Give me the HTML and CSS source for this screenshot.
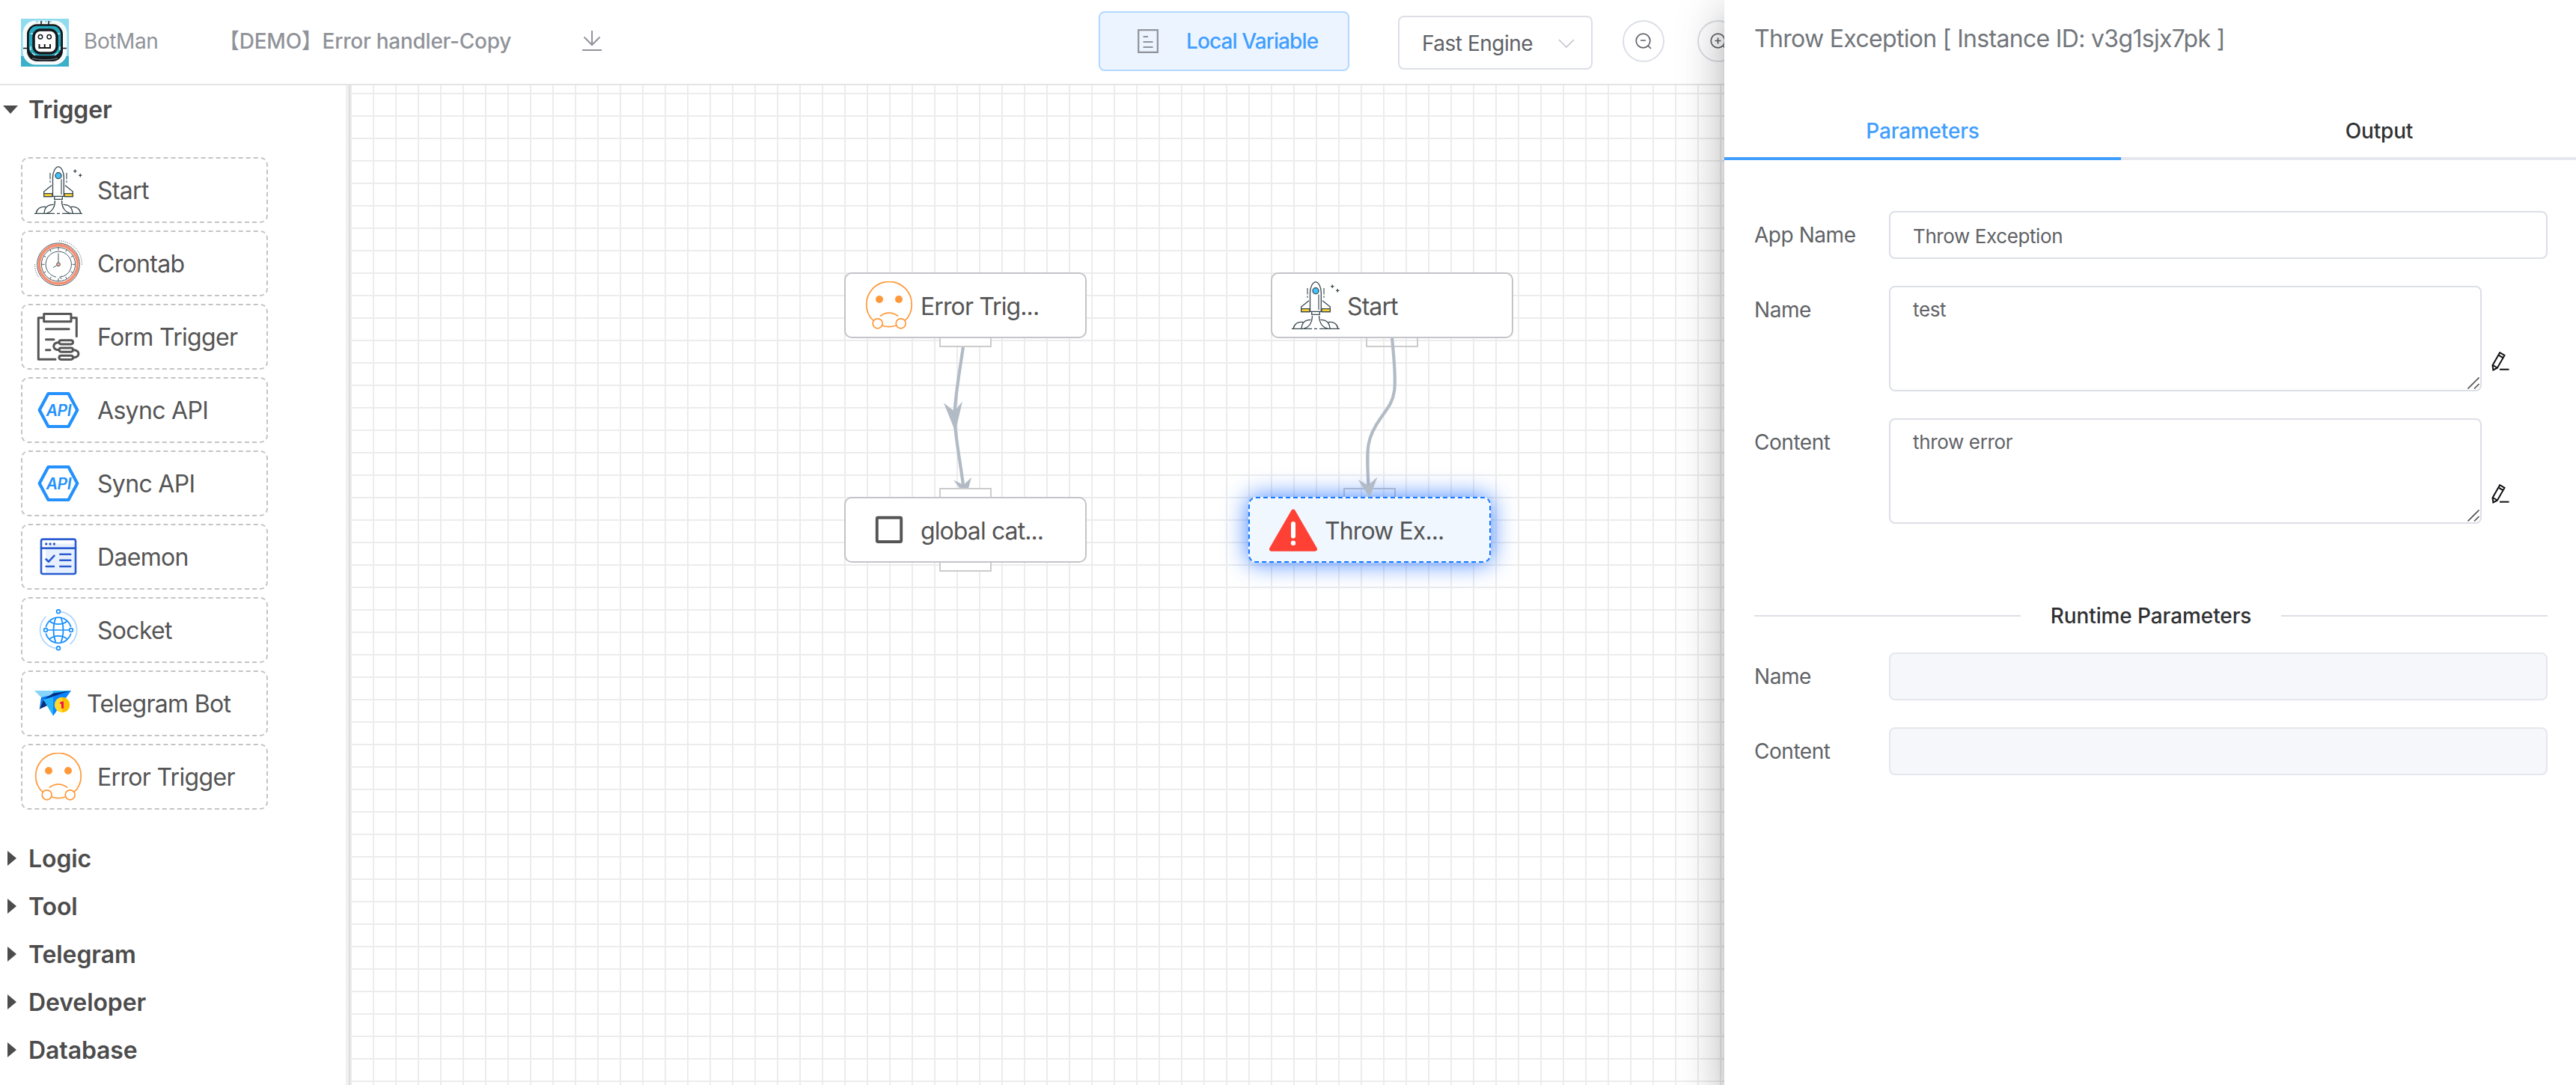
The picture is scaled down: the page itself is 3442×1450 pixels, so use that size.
FILE: index.html
```html
<!DOCTYPE html>
<html lang="en">
<head>
<meta charset="utf-8">
<title>BotMan</title>
<link rel="stylesheet" href="styles.css">
</head>
<body>
<svg class="sprite" aria-hidden="true">
  <symbol id="i-rocket" viewBox="0 0 64 64">
    <g fill="none" stroke="#37474f" stroke-width="1.3">
      <path d="M23 25.7 12.7 34v6.5H24M41 25.7 51.3 34v6.5H40"/>
      <path d="M12.7 36.6H24v4H12.7zM40 36.6h11.3v4H40z" fill="#fdd131"/>
      <path d="M24.5 40.3V15C24.5 8 28 .8 32 .8S39.3 8 39.3 15v25.3z" fill="#fff"/>
      <path d="M36 17.500v20.500" stroke="#90979b" stroke-width="2"/>
      <circle cx="32" cy="12.700" r="4" fill="#40c4ff"/>
      <path d="M26.700 40.700v3.600h10.600v-3.600"/>
      <path d="M21 9v8.500M21 19.500v2.500M43 9v8.500M43 19.500v2.500" stroke="#7d868b" stroke-width="1.700"/>
      <path d="M54.300 4.500v4.400M52.100 6.700h4.400M61.300 10.100v4.400M59.100 12.300h4.400"/>
      <path d="M27.400 46c.3 8-3.400 15-11 17M36.600 46c-.3 8 3.400 15 11 17M13 63c.5-7.500 5-11.700 12.500-11.700M51 63c-.5-7.500-5-11.700-12.500-11.700M2.300 63c.7-5.500 5.500-9.700 12.700-8.500M61.700 63c-.7-5.500-5.500-9.700-12.700-8.500"/>
      <path d="M0 63.300h27M30 63.300h4M37 63.300h27"/>
    </g>
  </symbol>
  <symbol id="i-clock" viewBox="0 0 64 64">
    <g fill="none" stroke="#455a64" stroke-width="1">
      <circle cx="32" cy="33.300" r="28.400"/>
      <circle cx="32" cy="33.300" r="25.700" stroke="#f68e71" stroke-width="3.600"/>
      <circle cx="32" cy="33.300" r="22.600"/>
      <path d="M29 50.200A17.200 17.200 0 1 1 36 50.100M33.500 50.700l3-2M33.500 50.700l3 1.800"/>
      <path d="M32 10.500v4M32 52v4M9.500 33.300h4M50.500 33.300h4M20.500 13.500l1.800 3M43.500 13.500l-1.800 3M20.500 53l1.800-3M43.500 53l-1.800-3M12.300 21.800l3 1.800M51.700 21.800l-3 1.800M12.300 44.800l3-1.800M51.700 44.800l-3-1.800"/>
      <path d="M32 18.500v12.500" stroke="#8a9499" stroke-width="1.600"/>
      <path d="M29.700 34.700 25 37.700"/>
      <circle cx="32" cy="33.300" r="2.400" fill="#ffab91"/>
      <path d="M33 1.800A31.500 31.500 0 0 1 63.500 34M.5 33a31.500 31.500 0 0 0 6 18.500" stroke-dasharray="1.200 1.600"/>
    </g>
  </symbol>
  <symbol id="i-form" viewBox="0 0 64 64">
    <g fill="none" stroke="#555" stroke-width="3" stroke-linejoin="round" stroke-linecap="round">
      <path d="M12.700 6.700H5.300v55.600H28M49 6.700h7.300V31.500M12.700 1.500H49v10.200H12.700z"/>
      <path d="M15.500 21.700h30.700M15.500 35.700h10.500M15.500 49.700h5.500"/>
      <rect x="33" y="36.700" width="18.500" height="5.200" rx="2.600"/>
      <rect x="33" y="47" width="18.500" height="5.200" rx="2.600"/>
      <rect x="33" y="57.200" width="18.500" height="5.200" rx="2.600"/>
      <path d="M32.500 39.500c-9 1-9 9.300 0 10.300M52 49.500c9 1 9.500 9.500 0 10.500"/>
    </g>
  </symbol>
  <symbol id="i-daemon" viewBox="0 0 64 64">
    <path d="M15 16H56v40H15z" fill="#e6f0fe"/>
    <path d="M9 9h46v11H9z" fill="#fff"/><path d="M28 14.500h26v4.500H15z" fill="#e6f0fe"/>
    <g fill="none" stroke="#2a5bd0" stroke-width="2.600" stroke-linecap="round" stroke-linejoin="round">
      <rect x="9" y="8.600" width="46" height="46.400" rx="2.500"/>
      <path d="M9 20.600h46"/>
      <path d="M15.700 15h.1M21 15h.1M26.300 15h.1" stroke-width="3.400"/>
      <path d="M15.500 35.300 19 38.700l7.500-8M34.300 28.700h14M34.300 36.700h14M34.300 45h14M15.700 45H26"/>
    </g>
  </symbol>
  <symbol id="i-socket" viewBox="0 0 64 64">
    <g fill="none" stroke="#1890ff" stroke-width="1.700">
      <path d="M35 7.600A24.500 24.500 0 0 1 47.500 51M29 56.300A24.500 24.500 0 0 1 15.500 14" stroke="#afd5fd"/>
      <path d="M15.300 28a17.300 17.300 0 0 1 33.400 0M15.300 36.500a17.300 17.300 0 0 0 33.400 0"/>
      <path d="M18 32h28M28.500 15.500c-4 10-4 23 0 33M35.500 15.500c4 10 4 23 0 33M20 20c7 5.500 17 5.500 24 0M20 44c7-5.500 17-5.500 24 0"/>
      <g fill="#fff"><circle cx="32" cy="7.300" r="2.400"/><circle cx="32" cy="56.300" r="2.400"/><circle cx="15" cy="32" r="2.400"/><circle cx="49" cy="32" r="2.400"/></g>
    </g>
  </symbol>
  <symbol id="i-telegram" viewBox="0 0 50 64">
    <path d="M0 15h25v7L9 24z" fill="#86d3fb"/>
    <path d="M25 15h24l-24 7z" fill="#27b5fa"/>
    <path d="M9 24 49 15 25 24 12 27 6.700 39.700z" fill="#0277fa"/>
    <path d="M25 18.500 49 15 12 27z" fill="#04307f"/>
    <path d="M49 15 12 27l13 6z" fill="#0a84ff"/>
    <path d="M6.700 39.700 12 27l6 7.500z" fill="#04307f"/>
    <path d="M12 27l13-3.500v25.200z" fill="#27b5fa"/>
    <path d="M25 23.500 49 15 25 48.700z" fill="#0a84ff"/>
    <circle cx="37" cy="34" r="10.200" fill="#ffda2d"/><path d="M37 23.800a10.200 10.200 0 0 1 0 20.400z" fill="#fdbf00"/>
    <path d="M34.300 30.500 36.500 29.500H39v9.200h-3v-6h-1.700z" fill="#f0124d"/>
  </symbol>
  <symbol id="i-face" viewBox="0 0 64 64">
    <g fill="none" stroke="#ff9838" stroke-width="1.700">
      <path d="M11 52.500C4.500 46.500 1.500 39 1.800 30.500A30.200 30.200 0 0 1 62.200 30.500c.3 8.500-2.700 16-9.200 22"/>
      <path d="M19.700 46.700c7.500-6 17-6 24.600 0M22.500 59c6 2 13 2 19 0"/>
      <circle cx="16.700" cy="56.300" r="6.500" fill="#fff"/><circle cx="47.700" cy="56.300" r="6.500" fill="#fff"/>
    </g>
    <g fill="#ff9838"><circle cx="19" cy="24" r="5"/><circle cx="45" cy="24" r="5"/></g>
  </symbol>
  <symbol id="i-square" viewBox="0 0 64 64">
    <rect x="15.800" y="15.800" width="32.400" height="32.200" rx="1.500" fill="none" stroke="#555" stroke-width="3.900"/>
  </symbol>
  <symbol id="i-warn" viewBox="0 0 64 64">
    <path d="M32 7.700 61 57.700H3z" fill="#ff4034" stroke="#ff4034" stroke-width="6" stroke-linejoin="round"/>
    <path d="M32 24v16.500" stroke="#fff" stroke-width="6" stroke-linecap="round"/>
    <circle cx="32" cy="49.700" r="3.200" fill="#fff"/>
  </symbol>
  <symbol id="i-edit" viewBox="0 0 24 26">
    <path d="M1.500 18.200 11.200 1.200l6.300 3.700-9.700 16.800-5.400 2.800zM9.500 4.700l6 3.500M2 18l5.500 3.500" fill="none" stroke="#111" stroke-width="2"/>
    <path d="M11 23.700h12.500" stroke="#111" stroke-width="2"/>
  </symbol>
</svg>

<div class="app">
  <header class="topbar">
    <svg class="logo" viewBox="0 0 64 64">
      <path d="M0 0h64v64H0z" fill="#8fdcef"/><path d="M0 50h64v14H0z" fill="#3bb0c9"/>
      <rect x="2.500" y="2.500" width="59" height="59" rx="17" fill="#f7fafb"/>
      <path d="M20 4h24" stroke="#8fdcef" stroke-width="2" stroke-dasharray="3 3"/>
      <path d="M27 3v5M37 3v5M3 39.500h8M53 39.500h8" stroke="#15181b" stroke-width="1.500"/>
      <rect x="8" y="8" width="48" height="49" rx="14" fill="#15181b"/>
      <rect x="9.500" y="8.500" width="45" height="42" rx="12" fill="#26a9be" stroke="#15181b" stroke-width="2.500"/>
      <path d="M15 53q17 4 34 0" fill="none" stroke="#5b666d" stroke-width="1.500"/>
      <rect x="17" y="15" width="31" height="31" rx="9" fill="#fff" stroke="#15181b" stroke-width="3.500"/>
      <path d="M13 20h3M49 20h3M15 46l4 3M49 46l-4 3M13 37v5M52 37v5" stroke="#c8f2f8" stroke-width="1.500"/>
      <circle cx="26" cy="24.300" r="2.700" fill="none" stroke="#15181b" stroke-width="1.500"/><circle cx="37.700" cy="24.300" r="2.700" fill="none" stroke="#15181b" stroke-width="1.500"/>
      <path d="M24.500 34v5h14.500v-5M31.700 34v5" fill="none" stroke="#15181b" stroke-width="2"/>
    </svg>
    <span class="brand">BotMan</span>
    <span class="doc">【DEMO】Error handler-Copy</span>
    <svg class="download" viewBox="0 0 26 28" fill="none" stroke="#909399" stroke-width="2"><path d="M13 0v19M2.500 8.500 13 19 23.500 8.500M0 26h26"/></svg>
    <button class="btn-local">
      <svg viewBox="0 0 28 32" width="28" height="32" fill="none" stroke="#909399" stroke-width="2.200"><path d="M1.200 1.200h25.600v29.600H1.200zM7.500 10h6.500M7.500 17h13M7.500 24h13"/></svg>
      <span>Local Variable</span>
    </button>
    <div class="select"><span>Fast Engine</span>
      <svg viewBox="0 0 22 12" width="22" height="12" fill="none" stroke="#c0c4cc" stroke-width="1.600"><path d="M1 1l10 10L21 1"/></svg>
    </div>
    <button class="round"><svg viewBox="0 0 22 22" width="22" height="22" fill="none" stroke="#606266" stroke-width="1.700"><circle cx="10.500" cy="10.500" r="9.300"/><path d="M7 10h7M17 17l4 4"/></svg></button>
    <button class="round round-next"><svg viewBox="0 0 22 22" width="22" height="22" fill="none" stroke="#606266" stroke-width="1.700"><circle cx="10.500" cy="10.500" r="9.300"/><path d="M6.500 10.500h8M10.500 6.500v8M17 17l4 4"/></svg></button>
  </header>

  <div class="body">
    <aside class="sidebar">
      <div class="group open">Trigger</div>
      <div class="items">
        <div class="item"><svg><use href="#i-rocket"/></svg><span>Start</span></div>
        <div class="item"><svg><use href="#i-clock"/></svg><span>Crontab</span></div>
        <div class="item"><svg><use href="#i-form"/></svg><span>Form Trigger</span></div>
        <div class="item"><svg viewBox="0 0 64 64"><path class="api-hex" d="M18.500 10h27L57.300 32 45.500 54h-27L6.700 32z"/><text class="api-text" x="32.500" y="40.300">API</text></svg><span>Async API</span></div>
        <div class="item"><svg viewBox="0 0 64 64"><path class="api-hex" d="M18.500 10h27L57.300 32 45.500 54h-27L6.700 32z"/><text class="api-text" x="32.500" y="40.300">API</text></svg><span>Sync API</span></div>
        <div class="item"><svg><use href="#i-daemon"/></svg><span>Daemon</span></div>
        <div class="item"><svg><use href="#i-socket"/></svg><span>Socket</span></div>
        <div class="item"><svg class="narrow"><use href="#i-telegram"/></svg><span>Telegram Bot</span></div>
        <div class="item"><svg><use href="#i-face"/></svg><span>Error Trigger</span></div>
      </div>
      <div class="group">Logic</div>
      <div class="group">Tool</div>
      <div class="group">Telegram</div>
      <div class="group">Developer</div>
      <div class="group">Database</div>
    </aside>
    <div class="splitter"></div>
    <main class="canvas">
      <div class="port out clear start-out"></div>
      <svg class="edges" viewBox="468 114 1836 1336" width="1836" height="1336" fill="none" stroke="#b2bbc5" stroke-width="4.200">
        <path d="M1288.500 452C1284 488 1275.500 530 1275.500 556S1284 620 1288.500 660"/>
        <path d="M1261 538.500 1275.300 549.500 1286 536.500 1276.500 577zM1274 641.500 1287.500 648 1298 638 1291 664z" fill="#b2bbc5" stroke="none"/>
        <path d="M1860 452C1868 530 1864 532 1846 557 1825 586 1826 598 1828.500 650"/>
      </svg>
      <div class="port out e-out"></div>
      <div class="port in g-in"></div>
      <div class="port out g-out"></div>
      <div class="port in t-in"></div>
      <div class="node n-error"><svg><use href="#i-face"/></svg><span>Error Trig...</span></div>
      <div class="node n-global"><svg><use href="#i-square"/></svg><span>global cat...</span></div>
      <div class="node n-start"><svg><use href="#i-rocket"/></svg><span>Start</span></div>
      <div class="node n-throw selected"><svg><use href="#i-warn"/></svg><span>Throw Ex...</span></div>
      <svg class="edges" viewBox="468 114 1836 1336" width="1836" height="1336"><path d="M1814.500 641 1828 648.500 1840.500 637.500 1830 665z" fill="#b2bbc5"/></svg>
    </main>
  </div>

  <section class="panel">
    <h1>Throw Exception [ Instance ID: v3g1sjx7pk ]</h1>
    <div class="tabs"><div class="tab active"><span>Parameters</span></div><div class="tab"><span>Output</span></div></div>
    <div class="form">
      <div class="row"><label>App Name</label><div class="input"><span>Throw Exception</span></div></div>
      <div class="row area"><label>Name</label><div class="textarea"><span>test</span>
        <svg class="grip" viewBox="0 0 16 16"><path d="M.5 15.500 15.500.5M9 15.500 15.500 9" stroke="#555" stroke-width="1.600"/></svg></div><svg class="edit"><use href="#i-edit"/></svg></div>
      <div class="row area"><label>Content</label><div class="textarea"><span>throw error</span>
        <svg class="grip" viewBox="0 0 16 16"><path d="M.5 15.500 15.500.5M9 15.500 15.500 9" stroke="#555" stroke-width="1.600"/></svg></div><svg class="edit"><use href="#i-edit"/></svg></div>
      <div class="divider"><span>Runtime Parameters</span></div>
      <div class="row"><label>Name</label><div class="input disabled"></div></div>
      <div class="row"><label>Content</label><div class="input disabled"></div></div>
    </div>
  </section>
</div>
</body>
</html>
```
FILE: styles.css
```css
* { box-sizing: border-box; }
body { margin: 0; font-family: Inter, "Noto Sans CJK SC", sans-serif; color: #606266; background: #fff; overflow: hidden; }
button { font: inherit; margin: 0; }
.sprite { position: absolute; width: 0; height: 0; }
.app { position: relative; width: 3442px; height: 1450px; display: flex; flex-direction: column; overflow: hidden; }

.topbar { flex: none; height: 114px; display: flex; align-items: flex-start; padding-left: 28px; border-bottom: 2px solid #e4e4e4; color: #909399; font-size: 28px; line-height: 40px; white-space: nowrap; }
.logo { flex: none; width: 64px; height: 64px; margin-top: 25px; }
.brand { flex: none; width: 200px; padding-left: 20px; margin-top: 35px; letter-spacing: -.4px; }
.doc { flex: none; width: 486px; margin-top: 35px; font-weight: 500; letter-spacing: -.25px; }
.download { flex: none; width: 26px; height: 28px; margin-top: 41px; }
.btn-local { flex: none; width: 335px; height: 80px; margin: 15px 0 0 664px; display: flex; align-items: center; padding: 0 0 0 50px; gap: 37px; background: #ecf4ff; border: 2px solid #b3d8ff; border-radius: 8px; color: #409eff; font-weight: 500; letter-spacing: -.9px; }
.select { flex: none; width: 260px; height: 72px; margin: 21px 0 0 65px; display: flex; align-items: center; justify-content: space-between; padding: 2px 22px 0 30px; border: 2px solid #dcdfe6; border-radius: 8px; color: #606266; letter-spacing: -.5px; }
.round { flex: none; width: 56px; height: 56px; margin: 27px 0 0 40px; padding: 0; display: flex; align-items: center; justify-content: center; background: #fff; border: 2px solid #dcdfe6; border-radius: 50%; }
.round-next { margin-left: 44px; }

.body { flex: 1; min-height: 0; display: flex; }
.sidebar { width: 462px; overflow: hidden; color: #4c4c4c; }
.group { height: 64px; display: flex; align-items: center; padding-left: 10px; gap: 16px; font-size: 32px; font-weight: 600; letter-spacing: -.1px; }
.group::before { content: ""; border: 10px solid transparent; border-left: 12px solid #4c4c4c; border-right: 0; }
.group.open { padding-left: 4px; gap: 14px; }
.group.open::before { border: 10px solid transparent; border-top: 11px solid #4c4c4c; border-bottom: 0; }
.items { display: flex; flex-direction: column; gap: 10px; padding: 32px 0 33px 28px; }
.item { width: 330px; height: 88px; display: flex; align-items: center; gap: 20px; padding-left: 16px; border: 2px dashed #c4c4c8; border-radius: 10px; font-size: 32px; letter-spacing: -.68px; color: #555; }
.item svg, .node svg { flex: none; width: 64px; height: 64px; }
.item span { padding-top: 1px; white-space: nowrap; }
.item .narrow { width: 50px; }
.api-hex { fill: none; stroke: #2491fc; stroke-width: 4.2px; stroke-linejoin: round; }
.api-text { font: italic 600 21px Inter, sans-serif; letter-spacing: -.3px; fill: #2491fc; text-anchor: middle; }
.splitter { flex: none; width: 6px; background: linear-gradient(90deg, #f0f0f0 4px, #dcdcdc 4px); }

.canvas { position: relative; flex: 1; background-color: #fff; background-image: linear-gradient(90deg, #ececec 2px, transparent 2px), linear-gradient(#ececec 2px, transparent 2px); background-size: 30px 30px; background-position: 0 0, 0 10px; }
.edges { position: absolute; left: 0; top: 0; }
.node { position: absolute; width: 324px; height: 88px; display: flex; align-items: center; gap: 10px; padding-left: 26px; background: #fff; border: 2px solid #c4c4c9; border-radius: 10px; font-size: 32px; letter-spacing: -.9px; color: #555; white-space: nowrap; }
.node span { padding-top: 2px; }
.n-error { left: 660px; top: 250px; }
.n-global { left: 660px; top: 550px; }
.n-start { left: 1230px; top: 250px; }
.n-throw { left: 1200px; top: 550px; }
.selected { background: #f0f7ff; border: 2px dashed #1879ff; box-shadow: 0 0 32px rgba(24, 104, 255, .85); }
.port { position: absolute; width: 70px; height: 14px; background: #fff; border: 2px solid #ccc; }
.port.clear { background: transparent; }
.e-out { left: 787px; top: 336px; }
.g-in { left: 787px; top: 538px; }
.g-out { left: 787px; top: 636px; }
.start-out { left: 1357px; top: 336px; }
.t-in { left: 1327px; top: 538px; background: transparent; }

.panel { position: absolute; left: 2304px; top: 0; width: 1138px; height: 1450px; background: #fff; box-shadow: 0 16px 20px -10px rgba(0, 0, 0, .2), 0 32px 48px 4px rgba(0, 0, 0, .14), 0 12px 60px 10px rgba(0, 0, 0, .12); font-size: 28px; }
.panel h1 { margin: 0; padding: 32px 0 0 40px; height: 136px; font-size: 32px; line-height: 40px; font-weight: 400; letter-spacing: -.68px; color: #72767b; }
.tabs { display: flex; height: 78px; border-bottom: 4px solid #e4e7ed; color: #303133; font-weight: 500; letter-spacing: -.2px; }
.tab { flex: 1; padding: 3px 0 0 82px; display: flex; justify-content: center; align-items: center; }
.tab.active { flex: none; width: 530px; height: 78px; padding: 3px 0 0; color: #409eff; border-bottom: 4px solid #409eff; }
.form { padding: 68px 38px 0 40px; display: flex; flex-direction: column; gap: 36px; }
.row { display: flex; height: 64px; align-items: center; }
.row label { width: 180px; letter-spacing: -.45px; }
.input { flex: 1; height: 64px; display: flex; align-items: center; padding: 2px 0 0 30px; border: 2px solid #dcdfe6; border-radius: 8px; font-size: 26px; letter-spacing: -.4px; }
.input.disabled { background: #f5f7fb; border-color: #e4e7ed; }
.row.area { height: 141px; align-items: flex-start; }
.area label { line-height: 64px; }
.textarea { position: relative; width: 792px; height: 141px; padding: 10px 30px; border: 2px solid #dcdfe6; border-radius: 8px; font-size: 26px; line-height: 39px; letter-spacing: -.35px; }
.grip { position: absolute; right: 1px; bottom: 1px; width: 16px; height: 16px; }
.edit { width: 24px; height: 26px; margin: 88px 0 0 13px; }
.divider { height: 64px; margin: 55px 0 -19px; display: flex; align-items: center; gap: 40px; color: #303133; font-weight: 500; letter-spacing: -.1px; }
.divider::before, .divider::after { content: ""; flex: 1; height: 2px; background: #dcdfe6; }
```
